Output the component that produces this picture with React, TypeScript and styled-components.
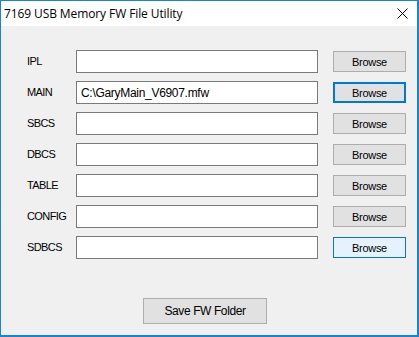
import React from "react";
import styled, { createGlobalStyle } from "styled-components";

const Global = createGlobalStyle`
  html, body { margin: 0; padding: 0; background: #ffffff; }
  * { box-sizing: border-box; }
`;

const Window = styled.div`
  width: 419px;
  height: 337px;
  border-style: solid;
  border-color: #1883d7;
  border-width: 1px 2px 2px 1px;
  background: #f0f0f0;
  display: flex;
  flex-direction: column;
  font-family: "Liberation Sans", Arial, sans-serif;
  color: #000;
`;

const TitleBar = styled.div`
  height: 25px;
  background: #ffffff;
  display: flex;
  align-items: center;
  justify-content: space-between;
  padding: 0 9px 0 3px;
`;

const Title = styled.span`
  font-family: "Open Sans", "Noto Sans", sans-serif;
  font-size: 12px;
  letter-spacing: -0.1px;
`;

const Close = styled.svg`
  width: 11px;
  height: 11px;
`;

const Content = styled.div`
  padding: 24px 0 0 26px;
  display: flex;
  flex-direction: column;
`;

const Rows = styled.div`
  display: flex;
  flex-direction: column;
  gap: 8px;
`;

const Row = styled.div`
  display: flex;
  align-items: center;
  height: 23px;
`;

const Label = styled.span`
  width: 49px;
  font-size: 11px;
  letter-spacing: -0.6px;
  padding-bottom: 2px;
`;

const Field = styled.div`
  width: 242px;
  height: 23px;
  background: #ffffff;
  border: 1px solid #7a7a7a;
  font-size: 12px;
  display: flex;
  align-items: center;
  padding-left: 4px;
  letter-spacing: -0.3px;
`;

type BtnState = "normal" | "focused" | "hover";

const Button = styled.div<{ $state?: BtnState }>`
  display: flex;
  align-items: center;
  justify-content: center;
  font-size: 11px;
  background: ${(p) => (p.$state === "hover" ? "#e5f1fb" : "#e1e1e1")};
  border: ${(p) =>
    p.$state === "focused"
      ? "2px solid #0078d7"
      : p.$state === "hover"
      ? "1px solid #0078d7"
      : "1px solid #adadad"};
`;

const BrowseButton = styled(Button)`
  width: 73px;
  height: 21px;
  margin-left: 15px;
  letter-spacing: -0.3px;
`;

const SaveButton = styled(Button)`
  width: 124px;
  height: 26px;
  margin-top: 39px;
  margin-left: 116px;
  font-size: 12px;
  letter-spacing: -0.4px;
`;

const rows: { label: string; value?: string; state?: BtnState }[] = [
  { label: "IPL" },
  { label: "MAIN", value: "C:\\GaryMain_V6907.mfw", state: "focused" },
  { label: "SBCS" },
  { label: "DBCS" },
  { label: "TABLE" },
  { label: "CONFIG" },
  { label: "SDBCS", state: "hover" },
];

export default function App() {
  return (
    <>
      <Global />
      <Window>
        <TitleBar>
          <Title>7169 USB Memory FW File Utility</Title>
          <Close viewBox="0 0 11 11">
            <path d="M0.5 0.5 L10.5 10.5 M10.5 0.5 L0.5 10.5" stroke="#000" strokeWidth="1" fill="none" />
          </Close>
        </TitleBar>
        <Content>
          <Rows>
            {rows.map((r) => (
              <Row key={r.label}>
                <Label>{r.label}</Label>
                <Field>{r.value ?? ""}</Field>
                <BrowseButton $state={r.state ?? "normal"}>Browse</BrowseButton>
              </Row>
            ))}
          </Rows>
          <SaveButton>Save FW Folder</SaveButton>
        </Content>
      </Window>
    </>
  );
}
